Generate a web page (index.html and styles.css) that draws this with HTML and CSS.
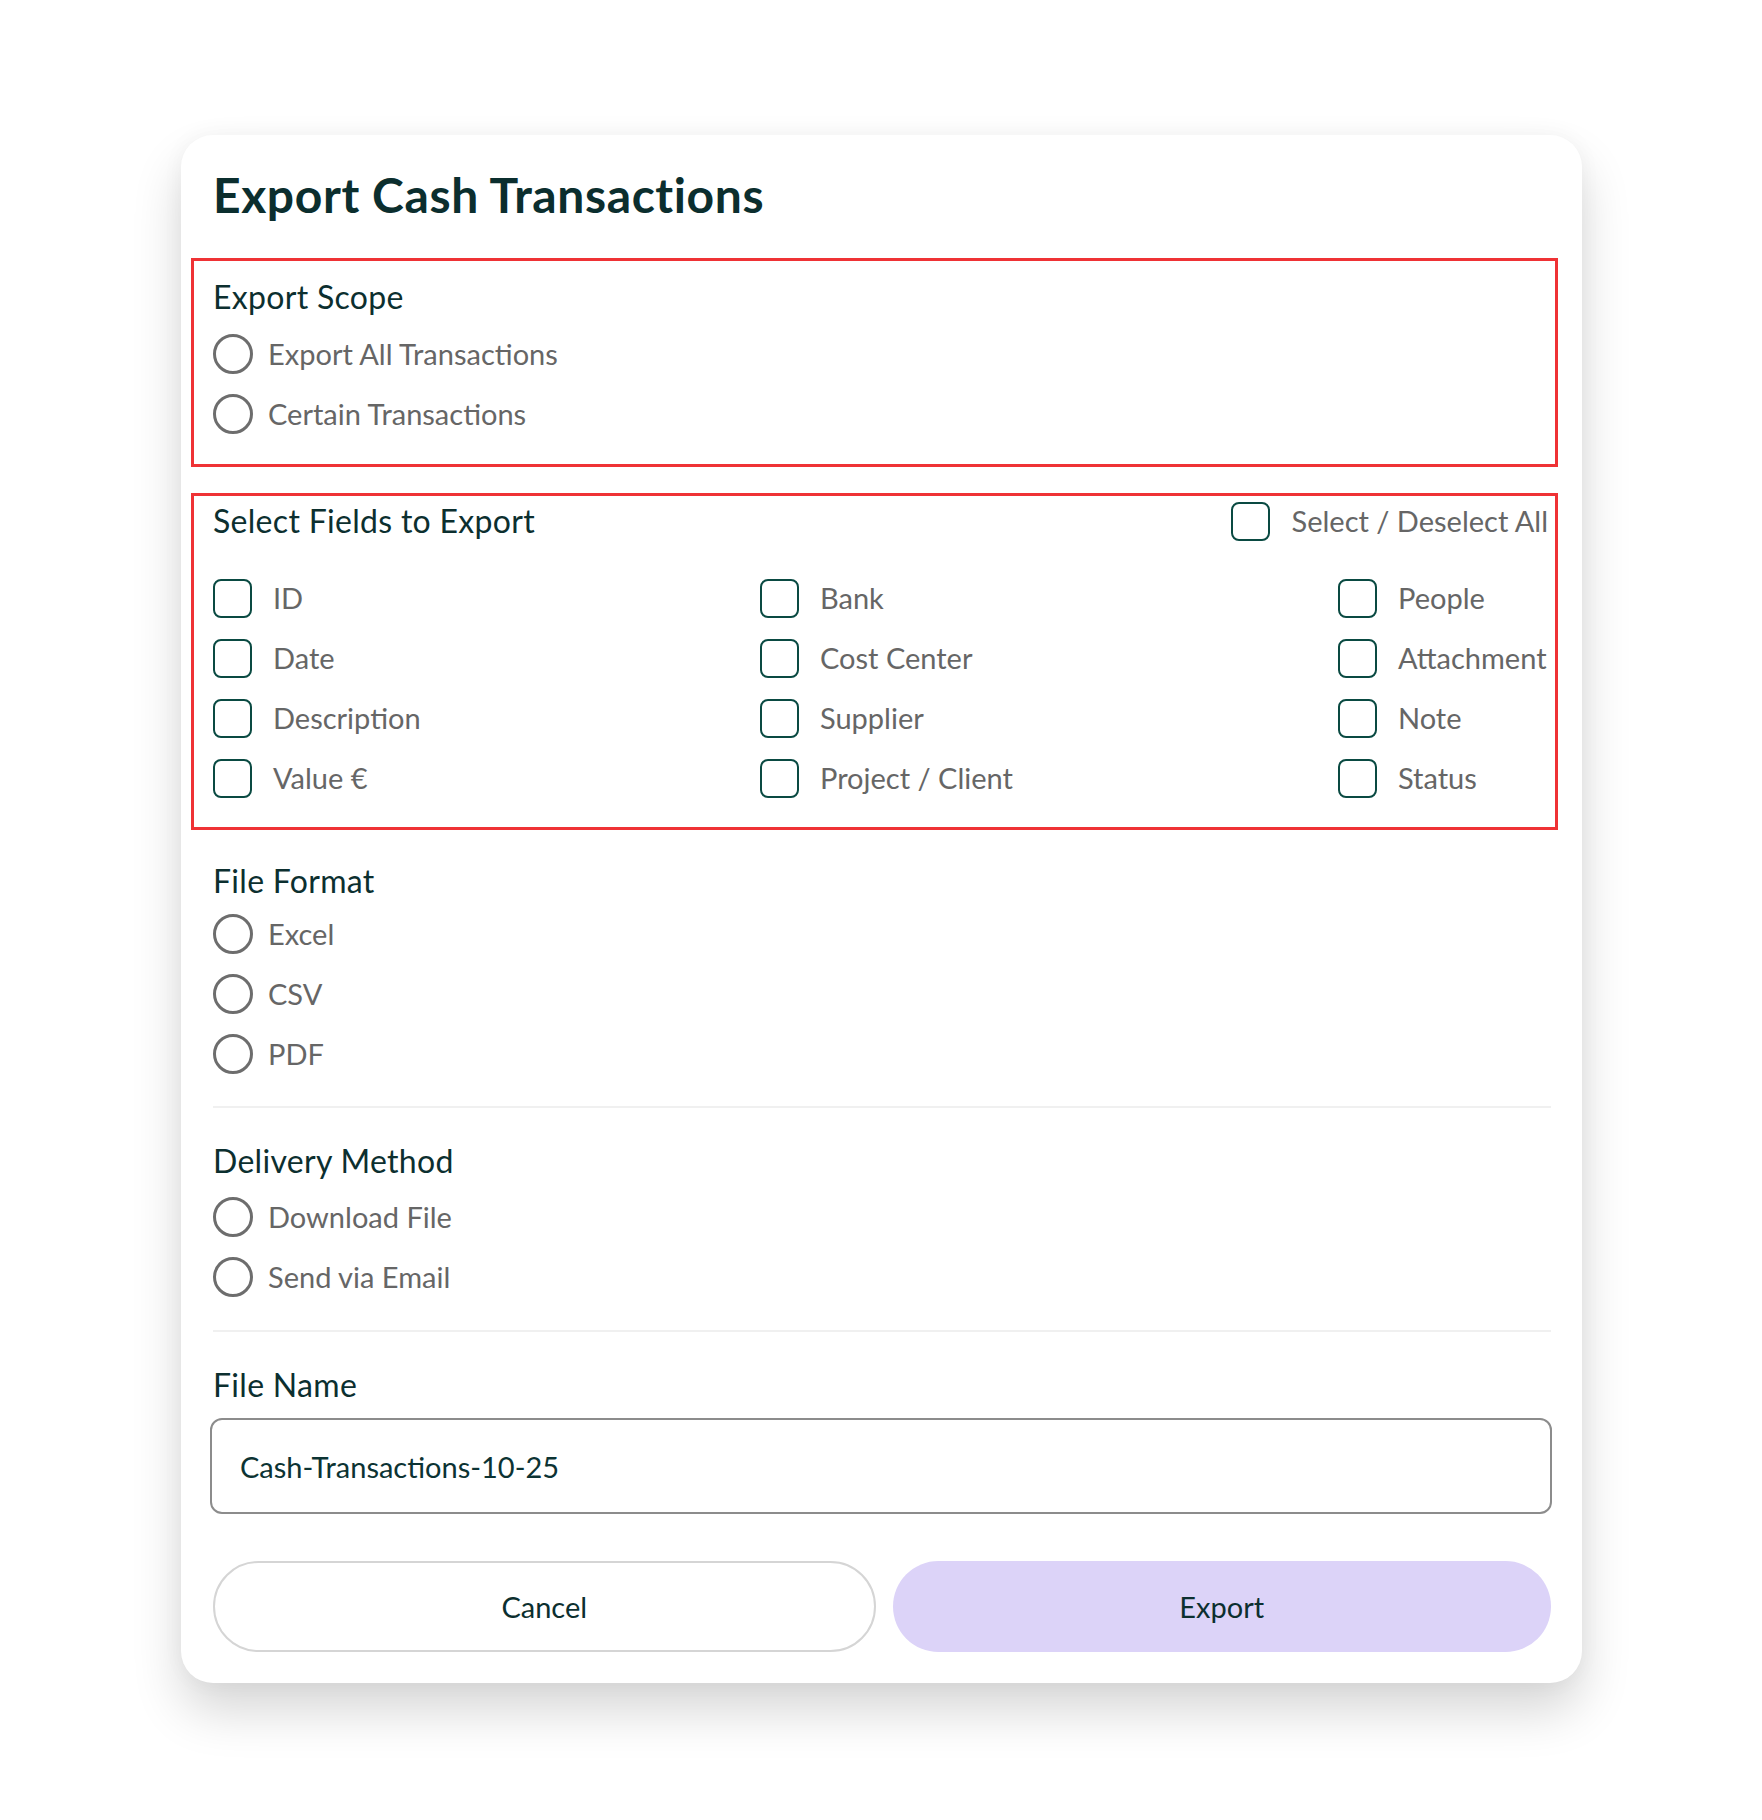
FILE: index.html
```
<!DOCTYPE html>
<html lang="en">
<head>
<meta charset="utf-8">
<title>Export Cash Transactions</title>
<link rel="stylesheet" href="styles.css">
</head>
<body>
<div class="page">
  <div class="card">
    <h1 class="title">Export Cash Transactions</h1>

    <section class="group scope">
      <div class="highlight"></div>
      <h2 class="label">Export Scope</h2>
      <div class="options">
        <label class="option"><span class="radio"></span><span class="opt-text">Export All Transactions</span></label>
        <label class="option"><span class="radio"></span><span class="opt-text">Certain Transactions</span></label>
      </div>
    </section>

    <section class="group fields">
      <div class="highlight"></div>
      <div class="fields-head">
        <h2 class="label">Select Fields to Export</h2>
        <label class="option check-all"><span class="checkbox"></span><span class="opt-text">Select / Deselect All</span></label>
      </div>
      <div class="field-grid">
        <label class="option"><span class="checkbox"></span><span class="opt-text">ID</span></label>
        <label class="option"><span class="checkbox"></span><span class="opt-text">Date</span></label>
        <label class="option"><span class="checkbox"></span><span class="opt-text">Description</span></label>
        <label class="option"><span class="checkbox"></span><span class="opt-text">Value €</span></label>
        <label class="option"><span class="checkbox"></span><span class="opt-text">Bank</span></label>
        <label class="option"><span class="checkbox"></span><span class="opt-text">Cost Center</span></label>
        <label class="option"><span class="checkbox"></span><span class="opt-text">Supplier</span></label>
        <label class="option"><span class="checkbox"></span><span class="opt-text">Project / Client</span></label>
        <label class="option"><span class="checkbox"></span><span class="opt-text">People</span></label>
        <label class="option"><span class="checkbox"></span><span class="opt-text">Attachment</span></label>
        <label class="option"><span class="checkbox"></span><span class="opt-text">Note</span></label>
        <label class="option"><span class="checkbox"></span><span class="opt-text">Status</span></label>
      </div>
    </section>

    <section class="group format">
      <h2 class="label">File Format</h2>
      <div class="options">
        <label class="option"><span class="radio"></span><span class="opt-text">Excel</span></label>
        <label class="option"><span class="radio"></span><span class="opt-text">CSV</span></label>
        <label class="option"><span class="radio"></span><span class="opt-text">PDF</span></label>
      </div>
    </section>

    <hr class="divider divider-1">

    <section class="group delivery">
      <h2 class="label">Delivery Method</h2>
      <div class="options">
        <label class="option"><span class="radio"></span><span class="opt-text">Download File</span></label>
        <label class="option"><span class="radio"></span><span class="opt-text">Send via Email</span></label>
      </div>
    </section>

    <hr class="divider divider-2">

    <section class="group filename">
      <h2 class="label">File Name</h2>
      <div class="input">Cash-Transactions-10-25</div>
    </section>

    <div class="actions">
      <button class="btn btn-cancel" type="button">Cancel</button>
      <button class="btn btn-export" type="button">Export</button>
    </div>
  </div>
</div>
</body>
</html>
```

FILE: styles.css
```
* {
  box-sizing: border-box;
}

html, body {
  margin: 0;
  padding: 0;
  background: #ffffff;
}

body {
  font-family: "Lato", "Liberation Sans", sans-serif;
  color: #0c2f2f;
}

.page {
  padding: 135px 0 0 181px;
  min-height: 1820px;
}

.card {
  width: 1401px;
  background: #ffffff;
  border-radius: 32px;
  padding: 32px 31px 31px 32px;
  box-shadow: 0 28px 50px rgba(0, 0, 0, 0.16), 0 0 22px rgba(0, 0, 0, 0.04);
}

.title {
  margin: 0;
  font-size: 48px;
  line-height: 56px;
  font-weight: 700;
  letter-spacing: 0.6px;
  color: #0b2e2e;
}

.group {
  position: relative;
}

.highlight {
  position: absolute;
  left: -22px;
  right: -7px;
  border: 3px solid #ef3235;
  pointer-events: none;
}

.label {
  margin: 0;
  font-size: 32px;
  line-height: 40px;
  font-weight: 400;
  letter-spacing: 0.3px;
  color: #0c2f2f;
}

.options {
  display: flex;
  flex-direction: column;
  gap: 20px;
}

.option {
  display: flex;
  align-items: center;
  height: 40px;
  font-size: 29px;
  line-height: 40px;
  color: #666666;
  white-space: nowrap;
}

.radio {
  flex: none;
  width: 40px;
  height: 40px;
  border: 3px solid #6d6d6d;
  border-radius: 50%;
  margin-right: 15px;
}

.checkbox {
  flex: none;
  width: 39px;
  height: 39px;
  border: 2.5px solid #0a4a42;
  border-radius: 8px;
  margin-right: 21px;
}

/* Export scope */
.scope {
  margin-top: 54px;
}

.scope .highlight {
  top: -19px;
  bottom: -33px;
}

.scope .options {
  margin-top: 17px;
}

/* Fields */
.fields {
  margin-top: 67px;
}

.fields .highlight {
  top: -8px;
  bottom: -32px;
}

.fields-head {
  display: flex;
  justify-content: space-between;
  align-items: center;
  height: 40px;
}

.check-all .checkbox {
  margin-right: 22px;
}

.check-all {
  margin-right: 3px;
}

.field-grid {
  margin-top: 37px;
  display: grid;
  grid-template-columns: 547px 578px 1fr;
  grid-template-rows: repeat(4, 40px);
  grid-auto-flow: column;
  row-gap: 20px;
}

/* File format */
.format {
  margin-top: 63px;
}

.format .options {
  margin-top: 13px;
}

.divider {
  margin: 0;
  border: 0;
  height: 2px;
  background: #f0f0f0;
}

.divider-1 {
  margin-top: 32px;
}

/* Delivery */
.delivery {
  margin-top: 33px;
}

.delivery .options {
  margin-top: 16px;
}

.divider-2 {
  margin-top: 33px;
}

/* File name */
.filename {
  margin-top: 33px;
}

.input {
  margin: 13px -1px 0 -3px;
  height: 96px;
  border: 2px solid #8c8c8c;
  border-radius: 12px;
  padding: 0 28px;
  display: flex;
  align-items: center;
  font-size: 29px;
  color: #0c3333;
}

.actions {
  margin-top: 47px;
  display: flex;
  gap: 17px;
}

.btn {
  flex: 1;
  height: 91px;
  border-radius: 46px;
  font-family: "Lato", "Liberation Sans", sans-serif;
  font-size: 29px;
  color: #0c2f2f;
  cursor: pointer;
}

.btn-cancel {
  background: #ffffff;
  border: 2px solid #d5d5d5;
}

.btn-export {
  background: #dcd3f8;
  border: 0;
}
```
